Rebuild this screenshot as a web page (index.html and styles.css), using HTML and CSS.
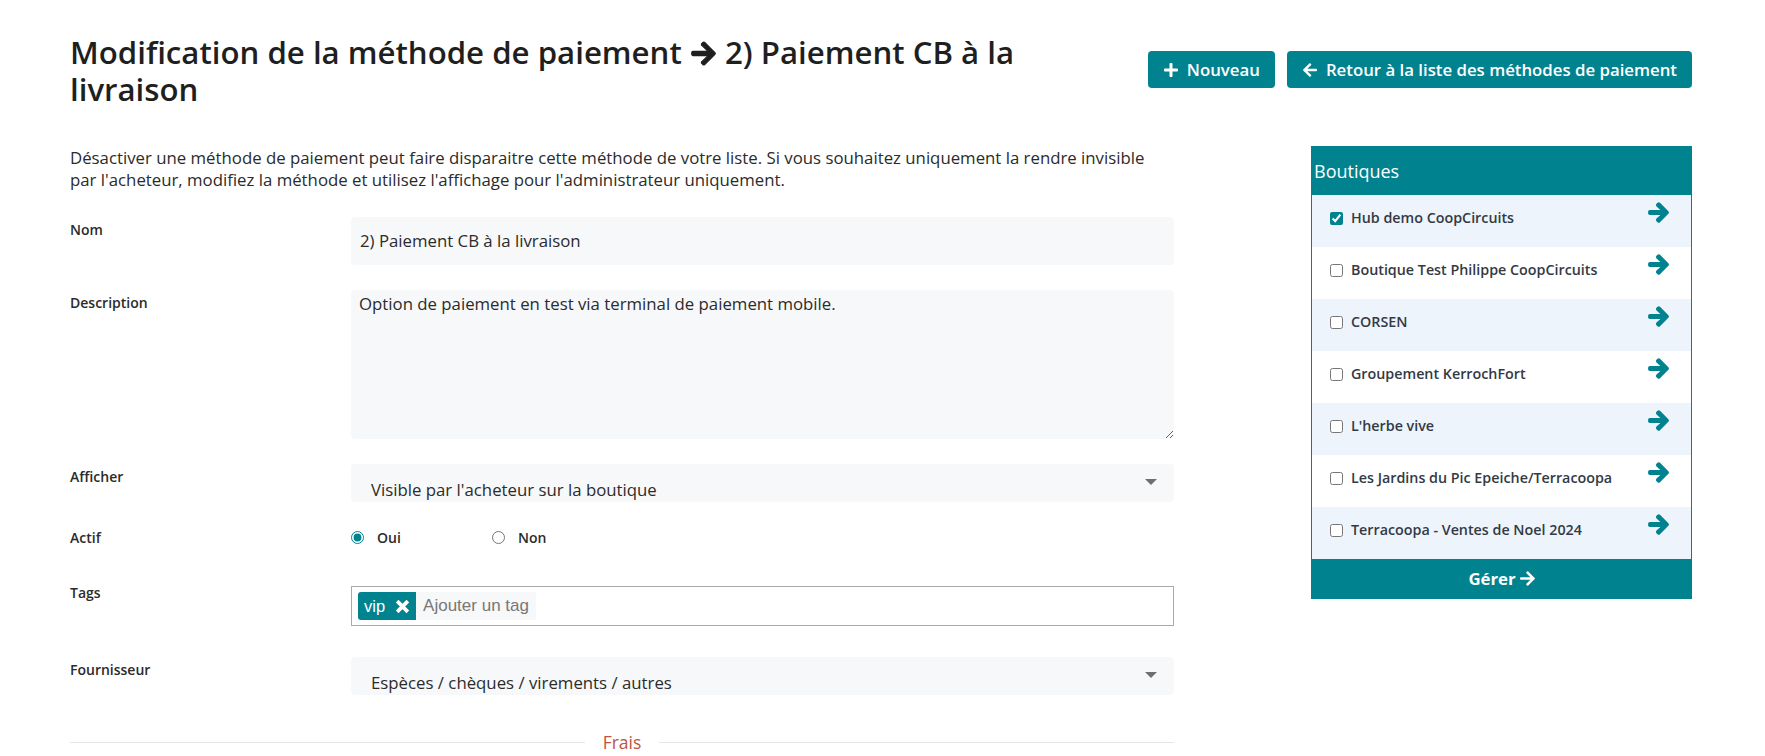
FILE: index.html
```html
<!DOCTYPE html>
<html lang="fr">
<head>
<meta charset="utf-8">
<title>Modification de la méthode de paiement</title>
<link rel="stylesheet" href="styles.css">
</head>
<body>
<div class="page">
  <header class="header">
    <h1 class="title">Modification de la méthode de paiement <svg class="title-arrow" viewBox="0 0 448 512"><path d="M190.5 66.9l22.2-22.2c9.4-9.4 24.6-9.4 33.9 0L441 239c9.4 9.4 9.4 24.6 0 33.9L246.6 467.3c-9.4 9.4-24.6 9.4-33.9 0l-22.2-22.2c-9.5-9.5-9.3-25 .4-34.3L311.4 296H24c-13.3 0-24-10.7-24-24v-32c0-13.3 10.7-24 24-24h287.4L190.9 101.2c-9.8-9.3-10-24.8-.4-34.3z"/></svg> 2) Paiement CB à la livraison</h1>
    <div class="actions">
      <a class="btn"><svg class="btn-icon" viewBox="0 0 448 512"><path d="M416 208H272V64c0-17.67-14.33-32-32-32h-32c-17.67 0-32 14.33-32 32v144H32c-17.67 0-32 14.33-32 32v32c0 17.67 14.33 32 32 32h144v144c0 17.67 14.33 32 32 32h32c17.67 0 32-14.33 32-32V304h144c17.67 0 32-14.33 32-32v-32c0-17.67-14.33-32-32-32z"/></svg>Nouveau</a>
      <a class="btn"><svg class="btn-icon" viewBox="0 0 448 512"><path d="M257.5 445.1l-22.2 22.2c-9.4 9.4-24.6 9.4-33.9 0L7 273c-9.4-9.4-9.4-24.6 0-33.9L201.4 44.7c9.4-9.4 24.6-9.4 33.9 0l22.2 22.2c9.5 9.5 9.3 25-.4 34.3L136.6 216H424c13.3 0 24 10.7 24 24v32c0 13.3-10.7 24-24 24H136.6l120.5 114.8c9.8 9.3 10 24.8.4 34.3z"/></svg>Retour à la liste des méthodes de paiement</a>
    </div>
  </header>

  <div class="content">
    <main class="main">
      <p class="intro">Désactiver une méthode de paiement peut faire disparaitre cette méthode de votre liste. Si vous souhaitez uniquement la rendre invisible par l'acheteur, modifiez la méthode et utilisez l'affichage pour l'administrateur uniquement.</p>

      <div class="row row-nom">
        <label class="label">Nom</label>
        <div class="field input">2) Paiement CB à la livraison</div>
      </div>

      <div class="row row-desc">
        <label class="label">Description</label>
        <textarea class="field textarea">Option de paiement en test via terminal de paiement mobile.</textarea>
      </div>

      <div class="row row-afficher">
        <label class="label">Afficher</label>
        <div class="field select"><span>Visible par l'acheteur sur la boutique</span><i class="caret"></i></div>
      </div>

      <div class="row row-actif">
        <label class="label">Actif</label>
        <div class="radios">
          <label class="radio"><input type="radio" name="actif" checked> Oui</label>
          <label class="radio"><input type="radio" name="actif"> Non</label>
        </div>
      </div>

      <div class="row row-tags">
        <label class="label">Tags</label>
        <div class="tags">
          <span class="chip">vip <svg class="chip-x" viewBox="0 0 14 14"><path d="M2 2L12 12M12 2L2 12"/></svg></span>
          <span class="tag-input">Ajouter un tag</span>
        </div>
      </div>

      <div class="row row-fourn">
        <label class="label">Fournisseur</label>
        <div class="field select"><span>Espèces / chèques / virements / autres</span><i class="caret"></i></div>
      </div>

      <div class="divider"><span>Frais</span></div>
    </main>

    <aside class="sidebar">
      <div class="side-head">Boutiques</div>
      <ul class="shops">
        <li class="shop"><label><input type="checkbox" checked> Hub demo CoopCircuits</label><svg class="go" viewBox="-20 20 488 472"><path d="M190.5 66.9l22.2-22.2c9.4-9.4 24.6-9.4 33.9 0L441 239c9.4 9.4 9.4 24.6 0 33.9L246.6 467.3c-9.4 9.4-24.6 9.4-33.9 0l-22.2-22.2c-9.5-9.5-9.3-25 .4-34.3L311.4 296H24c-13.3 0-24-10.7-24-24v-32c0-13.3 10.7-24 24-24h287.4L190.9 101.2c-9.8-9.3-10-24.8-.4-34.3z"/></svg></li>
        <li class="shop"><label><input type="checkbox"> Boutique Test Philippe CoopCircuits</label><svg class="go" viewBox="-20 20 488 472"><path d="M190.5 66.9l22.2-22.2c9.4-9.4 24.6-9.4 33.9 0L441 239c9.4 9.4 9.4 24.6 0 33.9L246.6 467.3c-9.4 9.4-24.6 9.4-33.9 0l-22.2-22.2c-9.5-9.5-9.3-25 .4-34.3L311.4 296H24c-13.3 0-24-10.7-24-24v-32c0-13.3 10.7-24 24-24h287.4L190.9 101.2c-9.8-9.3-10-24.8-.4-34.3z"/></svg></li>
        <li class="shop"><label><input type="checkbox"> CORSEN</label><svg class="go" viewBox="-20 20 488 472"><path d="M190.5 66.9l22.2-22.2c9.4-9.4 24.6-9.4 33.9 0L441 239c9.4 9.4 9.4 24.6 0 33.9L246.6 467.3c-9.4 9.4-24.6 9.4-33.9 0l-22.2-22.2c-9.5-9.5-9.3-25 .4-34.3L311.4 296H24c-13.3 0-24-10.7-24-24v-32c0-13.3 10.7-24 24-24h287.4L190.9 101.2c-9.8-9.3-10-24.8-.4-34.3z"/></svg></li>
        <li class="shop"><label><input type="checkbox"> Groupement KerrochFort</label><svg class="go" viewBox="-20 20 488 472"><path d="M190.5 66.9l22.2-22.2c9.4-9.4 24.6-9.4 33.9 0L441 239c9.4 9.4 9.4 24.6 0 33.9L246.6 467.3c-9.4 9.4-24.6 9.4-33.9 0l-22.2-22.2c-9.5-9.5-9.3-25 .4-34.3L311.4 296H24c-13.3 0-24-10.7-24-24v-32c0-13.3 10.7-24 24-24h287.4L190.9 101.2c-9.8-9.3-10-24.8-.4-34.3z"/></svg></li>
        <li class="shop"><label><input type="checkbox"> L'herbe vive</label><svg class="go" viewBox="-20 20 488 472"><path d="M190.5 66.9l22.2-22.2c9.4-9.4 24.6-9.4 33.9 0L441 239c9.4 9.4 9.4 24.6 0 33.9L246.6 467.3c-9.4 9.4-24.6 9.4-33.9 0l-22.2-22.2c-9.5-9.5-9.3-25 .4-34.3L311.4 296H24c-13.3 0-24-10.7-24-24v-32c0-13.3 10.7-24 24-24h287.4L190.9 101.2c-9.8-9.3-10-24.8-.4-34.3z"/></svg></li>
        <li class="shop"><label><input type="checkbox"> Les Jardins du Pic Epeiche/Terracoopa</label><svg class="go" viewBox="-20 20 488 472"><path d="M190.5 66.9l22.2-22.2c9.4-9.4 24.6-9.4 33.9 0L441 239c9.4 9.4 9.4 24.6 0 33.9L246.6 467.3c-9.4 9.4-24.6 9.4-33.9 0l-22.2-22.2c-9.5-9.5-9.3-25 .4-34.3L311.4 296H24c-13.3 0-24-10.7-24-24v-32c0-13.3 10.7-24 24-24h287.4L190.9 101.2c-9.8-9.3-10-24.8-.4-34.3z"/></svg></li>
        <li class="shop"><label><input type="checkbox"> Terracoopa - Ventes de Noel 2024</label><svg class="go" viewBox="-20 20 488 472"><path d="M190.5 66.9l22.2-22.2c9.4-9.4 24.6-9.4 33.9 0L441 239c9.4 9.4 9.4 24.6 0 33.9L246.6 467.3c-9.4 9.4-24.6 9.4-33.9 0l-22.2-22.2c-9.5-9.5-9.3-25 .4-34.3L311.4 296H24c-13.3 0-24-10.7-24-24v-32c0-13.3 10.7-24 24-24h287.4L190.9 101.2c-9.8-9.3-10-24.8-.4-34.3z"/></svg></li>
      </ul>
      <a class="side-foot">Gérer <svg class="foot-icon" viewBox="0 0 448 512"><path d="M190.5 66.9l22.2-22.2c9.4-9.4 24.6-9.4 33.9 0L441 239c9.4 9.4 9.4 24.6 0 33.9L246.6 467.3c-9.4 9.4-24.6 9.4-33.9 0l-22.2-22.2c-9.5-9.5-9.3-25 .4-34.3L311.4 296H24c-13.3 0-24-10.7-24-24v-32c0-13.3 10.7-24 24-24h287.4L190.9 101.2c-9.8-9.3-10-24.8-.4-34.3z"/></svg></a>
    </aside>
  </div>
</div>
</body>
</html>
```

FILE: styles.css
```css
* { box-sizing: border-box; }

html, body {
  margin: 0;
  background: #fff;
  font-family: "Open Sans", "Noto Sans", sans-serif;
  color: #222;
}

.page {
  width: 1765px;
  height: 756px;
  overflow: hidden;
  padding: 0 73px 0 70px;
}

.header {
  display: flex;
  justify-content: space-between;
  align-items: flex-start;
  padding-top: 34px;
}

.title {
  margin: 0;
  width: 1050px;
  font-size: 31.2px;
  line-height: 37px;
  font-weight: 600;
  color: #1f1f1f;
}

.title-arrow {
  width: 27px;
  height: 27px;
  fill: #1f1f1f;
  stroke: #1f1f1f;
  stroke-width: 20;
  vertical-align: -3px;
}

.actions {
  display: flex;
  gap: 12px;
  margin-top: 17px;
}

.btn {
  display: flex;
  align-items: center;
  gap: 9px;
  height: 37px;
  padding: 0 15px 0 16px;
  background: #00838f;
  color: #fff;
  border-radius: 4px;
  font-size: 16.8px;
  font-weight: 600;
  white-space: nowrap;
}

.btn-icon {
  width: 14px;
  height: 16px;
  fill: #fff;
}

.content {
  display: flex;
  justify-content: space-between;
  align-items: flex-start;
  margin-top: 38px;
}

.main {
  width: 1104px;
}

.intro {
  width: 1080px;
  margin: 1px 0 26px;
  font-size: 16.8px;
  line-height: 22px;
  color: #2b2b2b;
}

.row {
  display: grid;
  grid-template-columns: 281px 1fr;
  align-items: start;
}

.label {
  padding-top: 3px;
  font-size: 14px;
  line-height: 20px;
  font-weight: 600;
  color: #2b2b2b;
}

.field {
  display: block;
  width: 100%;
  background: #f7f8fa;
  border: none;
  border-radius: 4px;
  font-family: "Open Sans", "Noto Sans", sans-serif;
  font-size: 16.8px;
  color: #2b2b2b;
}

.input {
  height: 48px;
  line-height: 48px;
  padding: 0 9px;
}

.row-nom { margin-bottom: 25px; }

.textarea {
  height: 149px;
  padding: 3px 8px;
  line-height: 22px;
  resize: vertical;
  outline: none;
}

.row-desc { margin-bottom: 25px; }

.select {
  position: relative;
  height: 38px;
  padding: 15px 20px 0;
  line-height: 22px;
  overflow: hidden;
}

.caret {
  position: absolute;
  right: 17px;
  top: 15px;
  width: 0;
  height: 0;
  border-left: 6px solid transparent;
  border-right: 6px solid transparent;
  border-top: 6px solid #6f6f6f;
}

.row-afficher { margin-bottom: 23px; }

.row-actif { margin-bottom: 37px; }
.row-actif .label { padding-top: 3px; }

.radios {
  display: flex;
  height: 24px;
  align-items: center;
}

.radio {
  display: flex;
  align-items: center;
  gap: 13px;
  width: 141px;
  font-size: 14px;
  font-weight: 600;
  color: #2b2b2b;
}

.radio input {
  margin: 0;
  width: 13px;
  height: 13px;
  accent-color: #00838f;
}

.row-tags { margin-bottom: 31px; }
.row-tags .label { padding-top: 0; margin-top: -3px; }

.tags {
  display: flex;
  align-items: center;
  height: 40px;
  padding: 0 6px;
  border: 1px solid #a9a9a9;
  background: #fff;
}

.chip {
  display: flex;
  align-items: center;
  height: 28px;
  padding: 0 6px 0 6px;
  background: #00838f;
  color: #fff;
  border-radius: 3px 0 0 3px;
  font-family: "Liberation Sans", Arial, sans-serif;
  font-size: 16.5px;
}

.chip-x {
  width: 15px;
  height: 15px;
  margin-left: 10px;
  stroke: #fff;
  stroke-width: 3.4;
  fill: none;
}

.tag-input {
  display: flex;
  align-items: center;
  height: 28px;
  padding: 0 7px;
  background: #f7f8fa;
  color: #777;
  font-family: "Liberation Sans", Arial, sans-serif;
  font-size: 17px;
}

.row-fourn { margin-bottom: 35px; }

.divider {
  display: flex;
  align-items: center;
  gap: 18px;
  font-size: 17.5px;
  line-height: 24px;
  color: #c0533f;
}

.divider::before,
.divider::after {
  content: "";
  flex: 1;
  height: 1px;
  background: #e6e6e6;
}

.sidebar {
  width: 381px;
  border: 1px solid #00838f;
}

.side-head {
  height: 48px;
  padding: 0 2px;
  background: #00838f;
  color: #fff;
  font-size: 18px;
  line-height: 48px;
}

.shops {
  list-style: none;
  margin: 0;
  padding: 0;
}

.shop {
  display: flex;
  justify-content: space-between;
  align-items: flex-start;
  height: 52px;
  padding: 13px 22px 0 18px;
  background: #fff;
}

.shop:nth-child(odd) {
  background: #edf4fc;
}

.shop label {
  display: flex;
  align-items: center;
  gap: 8px;
  font-size: 14.3px;
  line-height: 20px;
  font-weight: 600;
  color: #333a44;
}

.shop input {
  margin: 0;
  width: 13px;
  height: 13px;
  accent-color: #00838f;
}

.go {
  width: 21px;
  height: 21px;
  margin-top: -6px;
  fill: #00838f;
  stroke: #00838f;
  stroke-width: 36;
  stroke-linejoin: round;
}

.side-foot {
  display: flex;
  justify-content: center;
  align-items: center;
  gap: 4px;
  height: 39px;
  background: #00838f;
  color: #fff;
  font-size: 16.8px;
  font-weight: 700;
}

.foot-icon {
  width: 15px;
  height: 17px;
  fill: #fff;
}
```
